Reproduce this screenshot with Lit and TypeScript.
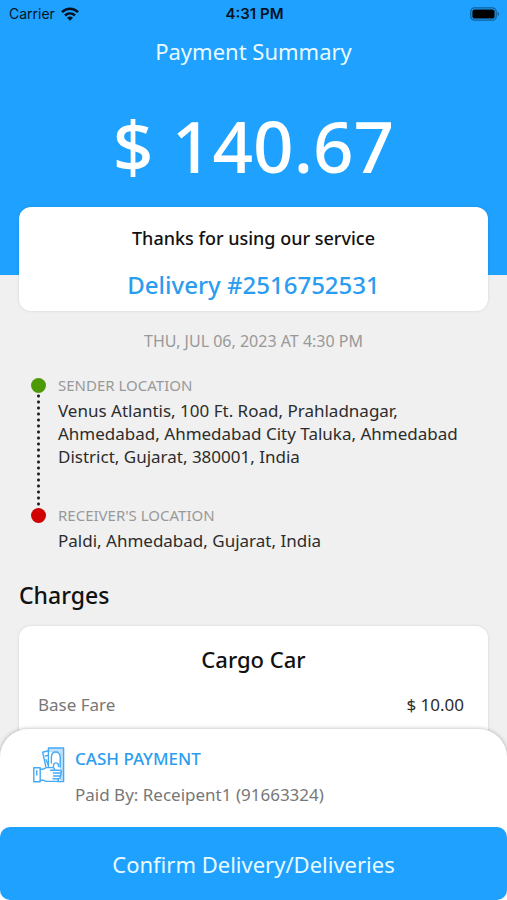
import { LitElement, html, css, svg } from "lit";
import { customElement, property } from "lit/decorators.js";

interface Stop {
  kind: "sender" | "receiver";
  label: string;
  address: string;
}

interface Charge {
  name: string;
  amount: string;
}

const wifiIcon = svg`<svg class="wifi" viewBox="0 0 18 14" width="18" height="14" aria-hidden="true">
  <g fill="none" stroke="#04121f" stroke-width="2.5">
    <path d="M1 5.2C5.4 .6 12.6 .6 17 5.2"/>
    <path d="M4 8.5C6.9 5.7 11.1 5.7 14 8.5"/>
  </g>
  <path d="M9 13.8 6 10.7C7.7 9.1 10.3 9.1 12 10.7Z" fill="#04121f"/>
</svg>`;

const batteryIcon = svg`<svg viewBox="0 0 30 14" width="30" height="14" aria-hidden="true">
  <rect x=".8" y=".8" width="25.4" height="12.4" rx="3.8" fill="none" stroke="#125f97" stroke-width="1.3"/>
  <rect x="2.4" y="2.4" width="22.2" height="9.2" rx="2.2" fill="#000"/>
  <path d="M27.6 4.8c2 .8 2 3.6 0 4.4z" fill="#125f97"/>
</svg>`;

const cashIcon = svg`<svg viewBox="0 0 32 36" width="32" height="36" aria-hidden="true"
  fill="none" stroke="#45a9f3" stroke-width="1.4" stroke-linejoin="round" stroke-linecap="round">
  <path d="M15.4 1H30.6V34.6H27V5H15.4Z" fill="#bfe1fb" stroke="none"/>
  <path d="M15.4 19.6V1H30.6V34.6H24"/>
  <path d="M18.4 16V10C18.6 6.6 20.6 5 22.8 5S27 6.6 27.2 10V20"/>
  <path d="M15.4 3.8 9.6 5.2 12.8 19.4M12.4 9 15.2 8.4M13 12.6 15.2 18"/>
  <path d="M20.4 19.6C20.4 14.6 25.6 14.6 25.6 19.6"/>
  <path d="M.8 20.8H7.2V34.8H.8ZM3.8 23.6V28"/>
  <path d="M7.2 22.2H10L13.4 20.6H19.8C22 20.6 22 23.2 19.8 23.2H17.6M19.8 23.2H27C29 23.2 29 26 27 26H20.4M27 26C28.6 26.4 28.4 28.8 26.8 29H20.4M26.4 29C28 29.6 27.4 31.8 25.8 31.8H20M25 32C26 33 25.2 34.4 24 34.4H13L10 33.2H7.2"/>
</svg>`;

@customElement("app-root")
export class AppRoot extends LitElement {
  @property({ attribute: false }) stops: Stop[] = [
    {
      kind: "sender",
      label: "SENDER LOCATION",
      address:
        "Venus Atlantis, 100 Ft. Road, Prahladnagar, Ahmedabad, Ahmedabad City Taluka, Ahmedabad District, Gujarat, 380001, India",
    },
    {
      kind: "receiver",
      label: "RECEIVER'S LOCATION",
      address: "Paldi, Ahmedabad, Gujarat, India",
    },
  ];

  @property({ attribute: false }) charges: Charge[] = [
    { name: "Base Fare", amount: "$ 10.00" },
  ];

  static styles = css`
    :host {
      display: flex;
      flex-direction: column;
      height: 100vh;
      overflow: hidden;
      background: #f0f0f0;
      color: #2c2c2c;
      font-family: "Noto Sans", "Open Sans", sans-serif;
      font-size: 17px;
      line-height: 24px;
    }
    h1, h2, h3, p, dl, dd, dt, ol {
      margin: 0;
      padding: 0;
      font-weight: 400;
    }
    .scroll {
      flex: 1;
      min-height: 0;
      overflow-y: auto;
      scrollbar-width: none;
    }
    .hero {
      background: #1ea1ff;
      padding-bottom: 67px;
      text-align: center;
      color: #fff;
    }
    .status {
      display: grid;
      grid-template-columns: 1fr auto 1fr;
      align-items: center;
      height: 28px;
      padding: 0 7px 0 9px;
      font-family: Inter, "Liberation Sans", sans-serif;
      font-size: 14px;
      color: #04121f;
    }
    .carrier {
      display: flex;
      align-items: center;
      gap: 6px;
    }
    .clock {
      font-size: 15px;
      font-weight: 600;
    }
    .battery {
      display: flex;
      justify-content: flex-end;
    }
    .title {
      font-size: 22px;
      line-height: 46px;
      color: #e9fbff;
    }
    .total {
      padding: 24px 0 14px;
      font-size: 71px;
      line-height: 96px;
      font-weight: 500;
    }
    .card {
      margin: 0 19px;
      border-radius: 12px;
      background: #fff;
      box-shadow: 0 0 3px rgba(0, 0, 0, 0.12);
    }
    .thanks {
      margin-top: -68px;
      padding: 16px 16px 6px;
      text-align: center;
      font-size: 18px;
      color: #111;
    }
    .thanks-line {
      font-weight: 500;
      line-height: 30px;
    }
    .delivery {
      padding-top: 12px;
      font-size: 24px;
      line-height: 40px;
      font-weight: 500;
      color: #2b9df0;
    }
    .date {
      padding: 18px 0;
      text-align: center;
      font-size: 16px;
      color: #999;
    }
    .stops {
      list-style: none;
      padding: 2px 40px 0 31px;
    }
    .stop {
      display: grid;
      grid-template-columns: 15px 1fr;
      column-gap: 12px;
    }
    .track {
      display: flex;
      flex-direction: column;
      align-items: center;
      padding-top: 5px;
    }
    .dot {
      width: 15px;
      height: 15px;
      border-radius: 50%;
      background: #d00000;
    }
    .sender .dot {
      background: #4e9a06;
    }
    .sender .line {
      flex: 1;
      width: 3px;
      margin-bottom: -5px;
      background: radial-gradient(circle, #222 1px, transparent 2px) 0 0 / 3px 6px;
    }
    .sender .stop-text {
      padding-bottom: 35px;
    }
    .stop-label {
      font-size: 15px;
      line-height: 24px;
      padding-bottom: 2px;
      color: #999;
    }
    .address {
      line-height: 23px;
    }
    .section {
      padding: 27px 19px 15px;
      font-size: 23px;
      line-height: 32px;
      font-weight: 500;
      color: #111;
    }
    .charges {
      padding: 17px 24px 24px 19px;
    }
    .vehicle {
      padding: 0 0 18px 5px;
      text-align: center;
      font-size: 22px;
      line-height: 32px;
      font-weight: 500;
      color: #111;
    }
    .charge {
      display: flex;
      justify-content: space-between;
    }
    .charge dt {
      color: #777;
    }
    .sheet {
      position: relative;
      margin-top: -28px;
      border-radius: 28px 28px 0 0;
      background: #fff;
      box-shadow: 0 0 4px rgba(0, 0, 0, 0.3);
    }
    .payment {
      display: flex;
      align-items: flex-start;
      gap: 10px;
      padding: 18px 33px;
    }
    .method {
      font-weight: 500;
      color: #2b9df0;
    }
    .payer {
      padding: 12px 0 2px;
      color: #777;
    }
    .confirm {
      display: block;
      width: 100%;
      border: 0;
      border-radius: 10px;
      padding: 21px 16px 20px;
      background: #1ea1ff;
      color: #e9fbff;
      font: inherit;
      font-size: 22px;
      line-height: 32px;
      cursor: pointer;
    }
  `;

  render() {
    return html`
      <main class="scroll">
        <header class="hero">
          <div class="status">
            <span class="carrier">Carrier ${wifiIcon}</span>
            <span class="clock">4:31 PM</span>
            <span class="battery">${batteryIcon}</span>
          </div>
          <h1 class="title">Payment Summary</h1>
          <p class="total">$ 140.67</p>
        </header>
        <section class="card thanks">
          <p class="thanks-line">Thanks for using our service</p>
          <h2 class="delivery">Delivery #2516752531</h2>
        </section>
        <p class="date">THU, JUL 06, 2023 AT 4:30 PM</p>
        <ol class="stops">
          ${this.stops.map(
            (s) => html`<li class="stop ${s.kind}">
              <div class="track"><span class="dot"></span><span class="line"></span></div>
              <div class="stop-text">
                <p class="stop-label">${s.label}</p>
                <p class="address">${s.address}</p>
              </div>
            </li>`
          )}
        </ol>
        <h2 class="section">Charges</h2>
        <section class="card charges">
          <h3 class="vehicle">Cargo Car</h3>
          <dl>
            ${this.charges.map(
              (c) => html`<div class="charge"><dt>${c.name}</dt><dd>${c.amount}</dd></div>`
            )}
          </dl>
        </section>
      </main>
      <footer class="sheet">
        <div class="payment">
          ${cashIcon}
          <div>
            <p class="method">CASH PAYMENT</p>
            <p class="payer">Paid By: Receipent1 (91663324)</p>
          </div>
        </div>
        <button class="confirm" type="button">Confirm Delivery/Deliveries</button>
      </footer>
    `;
  }
}
